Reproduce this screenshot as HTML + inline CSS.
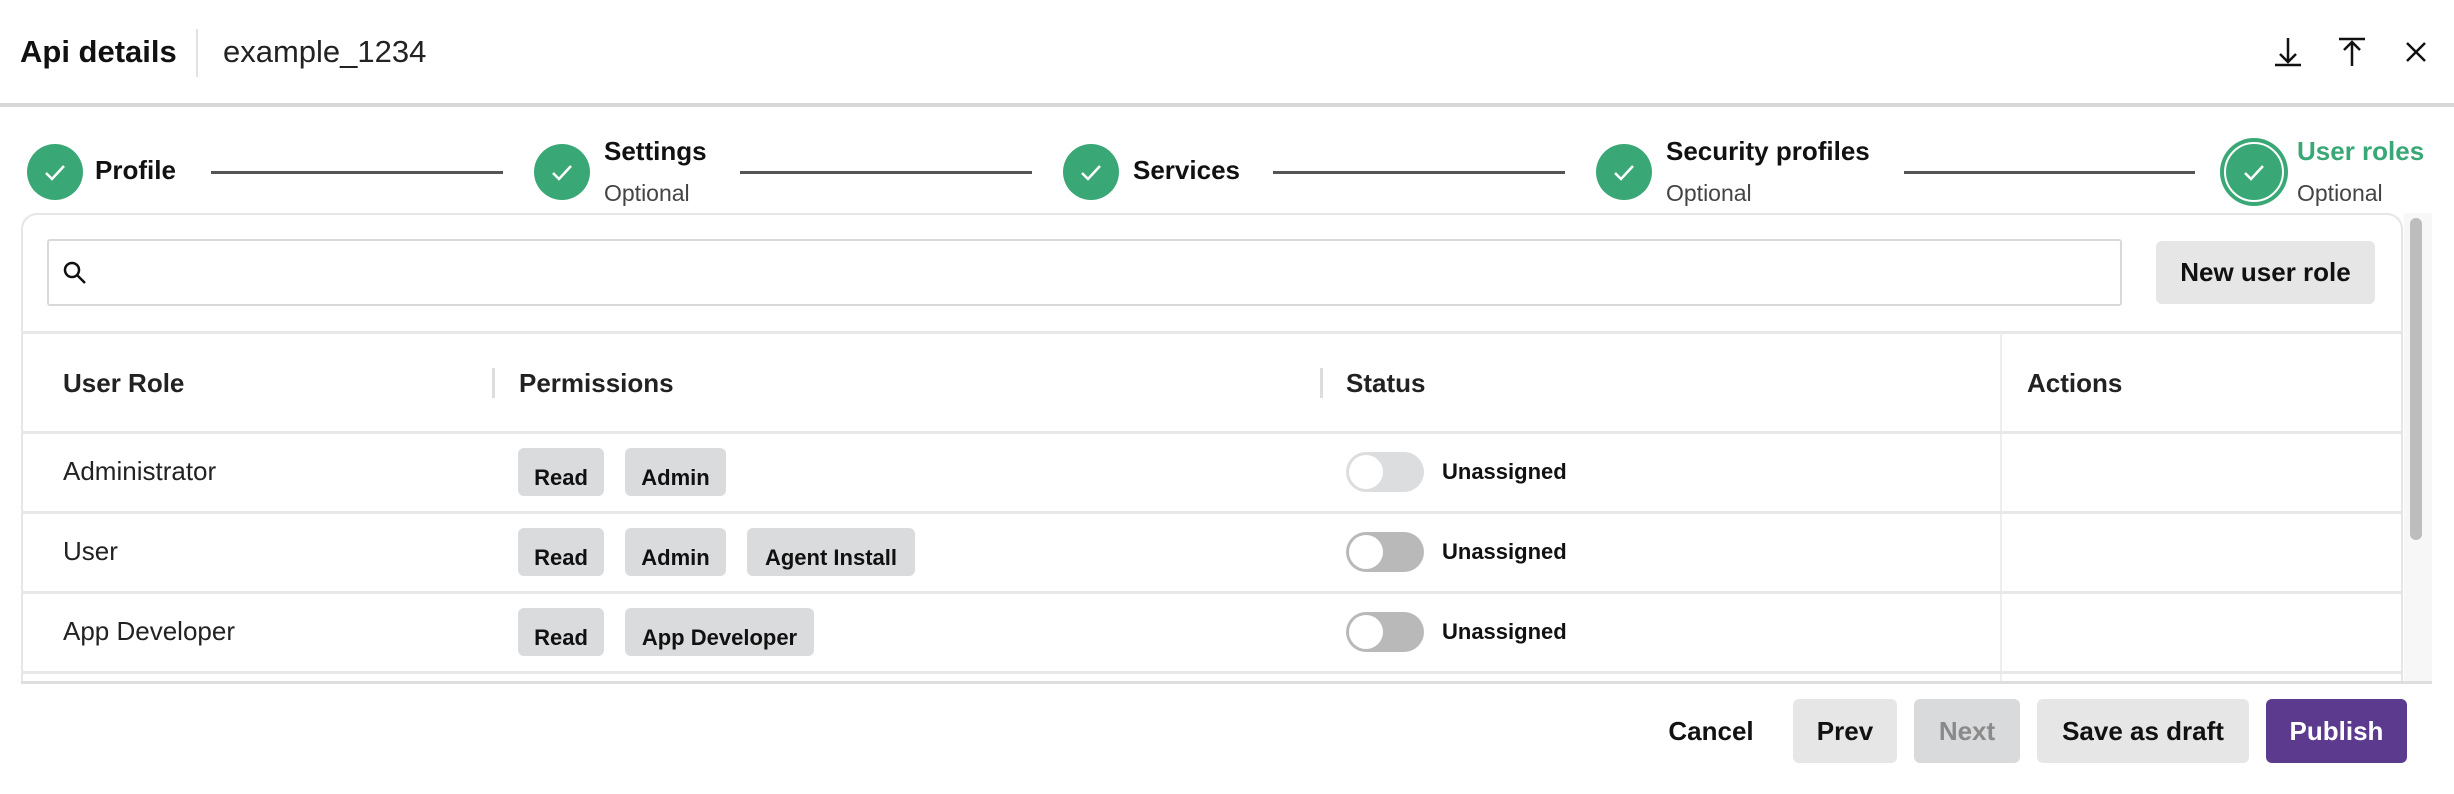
<!DOCTYPE html>
<html><head><meta charset="utf-8"><style>
*{box-sizing:border-box;margin:0;padding:0}
body{width:2454px;height:794px;background:#fff;position:relative;overflow:hidden;font-family:"Liberation Sans",Arial,sans-serif;color:#111}
.a{position:absolute;white-space:nowrap}
.b{font-weight:bold}
.circ{position:absolute;width:56px;height:56px;border-radius:50%;background:#3aa876;top:144px}
.circ svg{position:absolute;left:14px;top:14px}
.line{position:absolute;top:171px;height:3px;background:#555}
.st{font-size:26px;font-weight:bold}
.op{font-size:23px;color:#444}
.hl{position:absolute;left:21px;width:2380px;height:3px;background:#e8e8e8}
.chip{position:absolute;height:48px;background:#dadbdd;border-radius:6px;font-weight:bold;font-size:22px;padding-top:17px;text-align:center}
.tg{position:absolute;left:1346px;width:78px;height:40px;border-radius:20px;background:#b9b9b9}
.tg::after{content:"";position:absolute;left:3px;top:3px;width:34px;height:34px;border-radius:50%;background:#fff}
.ua{position:absolute;left:1442px;font-size:22px;font-weight:bold}
.rt{position:absolute;left:63px;font-size:26px;color:#222}
.btn{position:absolute;top:699px;height:64px;border-radius:6px;font-size:26px;font-weight:bold;text-align:center;line-height:64px}
</style></head><body>
<div class="a b" style="left:20px;top:34px;font-size:31px">Api details</div>
<div class="a" style="left:196px;top:29px;width:2px;height:48px;background:#e2e2e2"></div>
<div class="a" style="left:223px;top:34px;font-size:31px;color:#222">example_1234</div>
<svg class="a" style="left:2272px;top:36px" width="32" height="32" viewBox="0 0 32 32"><path d="M16 2v24M8 18l8 8 8-8M3 29h26" stroke="#111" stroke-width="2.5" fill="none"/></svg>
<svg class="a" style="left:2336px;top:36px" width="32" height="32" viewBox="0 0 32 32"><path d="M3 3h26M16 30V6M8 14l8-8 8 8" stroke="#111" stroke-width="2.5" fill="none"/></svg>
<svg class="a" style="left:2404px;top:40px" width="24" height="24" viewBox="0 0 24 24"><path d="M3 3l18 18M21 3L3 21" stroke="#111" stroke-width="2.5"/></svg>
<div class="a" style="left:0;top:103px;width:2454px;height:4px;background:#d8d8d8"></div>

<div class="circ" style="left:27px"><svg width="28" height="28" viewBox="0 0 28 28"><path d="M5 15l6 6 12-13" stroke="#fff" stroke-width="2.5" fill="none"/></svg></div>
<div class="a st" style="left:95px;top:155px">Profile</div>
<div class="line" style="left:211px;width:292px"></div>
<div class="circ" style="left:534px"><svg width="28" height="28" viewBox="0 0 28 28"><path d="M5 15l6 6 12-13" stroke="#fff" stroke-width="2.5" fill="none"/></svg></div>
<div class="a st" style="left:604px;top:136px">Settings</div>
<div class="a op" style="left:604px;top:180px">Optional</div>
<div class="line" style="left:740px;width:292px"></div>
<div class="circ" style="left:1063px"><svg width="28" height="28" viewBox="0 0 28 28"><path d="M5 15l6 6 12-13" stroke="#fff" stroke-width="2.5" fill="none"/></svg></div>
<div class="a st" style="left:1133px;top:155px">Services</div>
<div class="line" style="left:1273px;width:292px"></div>
<div class="circ" style="left:1596px"><svg width="28" height="28" viewBox="0 0 28 28"><path d="M5 15l6 6 12-13" stroke="#fff" stroke-width="2.5" fill="none"/></svg></div>
<div class="a st" style="left:1666px;top:136px">Security profiles</div>
<div class="a op" style="left:1666px;top:180px">Optional</div>
<div class="line" style="left:1904px;width:291px"></div>
<div class="a" style="left:2220px;top:138px;width:68px;height:68px;border-radius:50%;background:#3aa876"></div>
<div class="a" style="left:2224px;top:142px;width:60px;height:60px;border-radius:50%;border:2px solid #fff"></div>
<svg class="a" style="left:2240px;top:158px" width="28" height="28" viewBox="0 0 28 28"><path d="M5 15l6 6 12-13" stroke="#fff" stroke-width="2.5" fill="none"/></svg>
<div class="a st" style="left:2297px;top:136px;color:#3aa876">User roles</div>
<div class="a op" style="left:2297px;top:180px">Optional</div>

<div class="a" style="left:21px;top:213px;width:2382px;height:470px;border:2px solid #e6e6e6;border-bottom:none;border-radius:16px 16px 0 0"></div>
<div class="a" style="left:2404px;top:213px;width:28px;height:470px;background:#f7f7f7"></div>
<div class="a" style="left:2410px;top:218px;width:12px;height:322px;border-radius:6px;background:#bdbdbd"></div>
<div class="a" style="left:47px;top:239px;width:2075px;height:67px;border:2px solid #d9d9d9;border-radius:3px"></div>
<svg class="a" style="left:62px;top:260px" width="26" height="26" viewBox="0 0 26 26"><circle cx="10" cy="10" r="7" stroke="#111" stroke-width="2.5" fill="none"/><path d="M15 15l8 8" stroke="#111" stroke-width="2.5"/></svg>
<div class="a b" style="left:2156px;top:241px;width:219px;height:63px;background:#e6e6e6;border-radius:6px;font-size:26px;text-align:center;line-height:63px">New user role</div>

<div class="hl" style="top:331px"></div>
<div class="a" style="left:2000px;top:333px;width:2px;height:349px;background:#eee"></div>
<div class="a b" style="left:63px;top:368px;font-size:26px;color:#222">User Role</div>
<div class="a" style="left:492px;top:368px;width:3px;height:30px;background:#ddd"></div>
<div class="a b" style="left:519px;top:368px;font-size:26px;color:#222">Permissions</div>
<div class="a" style="left:1320px;top:368px;width:3px;height:30px;background:#ddd"></div>
<div class="a b" style="left:1346px;top:368px;font-size:26px;color:#222">Status</div>
<div class="a b" style="left:2027px;top:368px;font-size:26px;color:#222">Actions</div>

<div class="hl" style="top:431px"></div>
<div class="rt" style="top:456px">Administrator</div>
<div class="chip" style="left:518px;top:448px;width:86px">Read</div>
<div class="chip" style="left:625px;top:448px;width:101px">Admin</div>
<div class="tg" style="top:452px;background:#dcdddf"></div>
<div class="ua" style="top:459px">Unassigned</div>

<div class="hl" style="top:511px"></div>
<div class="rt" style="top:536px">User</div>
<div class="chip" style="left:518px;top:528px;width:86px">Read</div>
<div class="chip" style="left:625px;top:528px;width:101px">Admin</div>
<div class="chip" style="left:747px;top:528px;width:168px">Agent Install</div>
<div class="tg" style="top:532px"></div>
<div class="ua" style="top:539px">Unassigned</div>

<div class="hl" style="top:591px"></div>
<div class="rt" style="top:616px">App Developer</div>
<div class="chip" style="left:518px;top:608px;width:86px">Read</div>
<div class="chip" style="left:625px;top:608px;width:189px">App Developer</div>
<div class="tg" style="top:612px"></div>
<div class="ua" style="top:619px">Unassigned</div>

<div class="hl" style="top:671px"></div>
<div class="a" style="left:21px;top:681px;width:2411px;height:3px;background:#dedede"></div>

<div class="btn" style="left:1655px;width:112px">Cancel</div>
<div class="btn" style="left:1793px;width:104px;background:#e6e6e6">Prev</div>
<div class="btn" style="left:1914px;width:106px;background:#d9dadc;color:#8a8a8a">Next</div>
<div class="btn" style="left:2037px;width:212px;background:#e6e6e6">Save as draft</div>
<div class="btn" style="left:2266px;width:141px;background:#5c3a8e;color:#fff">Publish</div>
</body></html>
